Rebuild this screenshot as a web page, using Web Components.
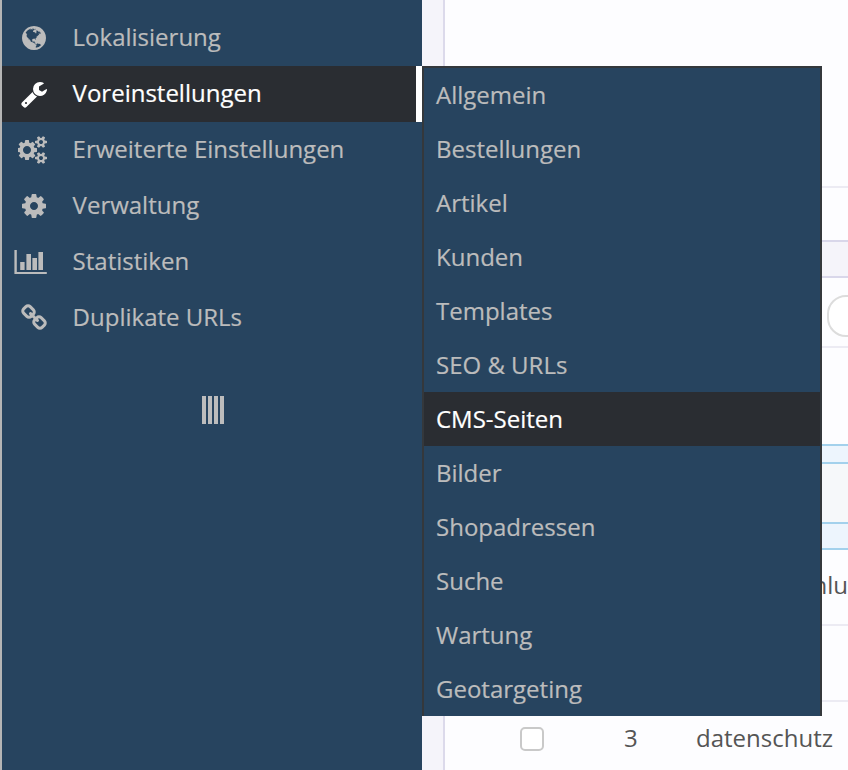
<!DOCTYPE html>
<html lang="de"><head><meta charset="utf-8"><title>Menü</title>
<style>
html,body{margin:0;padding:0;height:770px;overflow:hidden;background:#fdfdff;font-family:"Open Sans",sans-serif}
</style></head><body>
<admin-page>
  <side-bar slot="side">
    <nav-item icon="globe">Lokalisierung</nav-item>
    <nav-item icon="wrench" active>Voreinstellungen</nav-item>
    <nav-item icon="cogs">Erweiterte Einstellungen</nav-item>
    <nav-item icon="cog">Verwaltung</nav-item>
    <nav-item icon="chart">Statistiken</nav-item>
    <nav-item icon="link">Duplikate URLs</nav-item>
  </side-bar>
  <fly-menu slot="fly">
    <fly-item>Allgemein</fly-item><fly-item>Bestellungen</fly-item><fly-item>Artikel</fly-item><fly-item>Kunden</fly-item><fly-item>Templates</fly-item><fly-item>SEO &amp; URLs</fly-item><fly-item active>CMS-Seiten</fly-item><fly-item>Bilder</fly-item><fly-item>Shopadressen</fly-item><fly-item>Suche</fly-item><fly-item>Wartung</fly-item><fly-item>Geotargeting</fly-item>
  </fly-menu>
  <back-table slot="content"></back-table>
</admin-page>
<script>
const ICONS={
 wrench:['0 0 1792 1792',18,'M448 1472q0-26-19-45t-45-19-45 19-19 45 19 45 45 19 45-19 19-45zm644-420l-682 682q-37 37-90 37-52 0-91-37l-106-108q-38-36-38-90 0-53 38-91l681-681q39 98 114.5 173.5t173.5 114.5zm634-435q0 39-23 106-47 134-164.5 217.5t-258.5 83.5q-185 0-316.5-131.5t-131.5-316.5 131.5-316.5 316.5-131.5q58 0 121.5 16.5t107.5 46.5q16 11 16 28t-16 28l-293 169v224l193 107q5-3 79-48.5t135.5-81 70.5-35.5q15 0 23.5 10t8.5 25z'],
 cog:['0 0 1792 1792',18,'M1152 896q0-106-75-181t-181-75-181 75-75 181 75 181 181 75 181-75 75-181zm512-109v222q0 12-8 23t-20 13l-185 28q-19 54-39 91 35 50 107 138 10 12 10 25t-9 23q-27 37-99 108t-94 71q-12 0-26-9l-138-108q-44 23-91 38-16 136-29 186-7 28-36 28h-222q-14 0-24.5-8.5t-11.5-21.5l-28-184q-49-16-90-37l-141 107q-10 9-25 9-14 0-25-11-126-114-165-168-7-10-7-23 0-12 8-23 15-21 51-66.5t54-70.5q-27-50-41-99l-183-27q-13-2-21-12.5t-8-23.5v-222q0-12 8-23t19-13l186-28q14-46 39-92-40-57-107-138-10-12-10-24 0-10 9-23 26-36 98.5-107.5t94.5-71.5q13 0 26 10l138 107q44-23 91-38 16-136 29-186 7-28 36-28h222q14 0 24.5 8.5t11.5 21.5l28 184q49 16 90 37l142-107q9-9 24-9 13 0 25 10 129 119 165 170 7 8 7 22 0 12-8 23-15 21-51 66.5t-54 70.5q26 50 41 98l183 28q13 2 21 12.5t8 23.5z'],
 cogs:['0 0 1920 1792',15.5,'M832 896q0-106-75-181t-181-75-181 75-75 181 75 181 181 75 181-75 75-181zm768 512q0-52-38-90t-90-38-90 38-38 90q0 53 37.5 90.5t90.5 37.5 90.5-37.5 37.5-90.5zm0-1024q0-52-38-90t-90-38-90 38-38 90q0 53 37.5 90.5t90.5 37.5 90.5-37.5 37.5-90.5zm-384 421v185q0 10-7 19.5t-16 10.5l-155 24q-11 35-32 76 34 48 90 115 7 11 7 20 0 12-7 19-23 30-82.5 89.5t-78.5 59.5q-11 0-21-7l-115-90q-37 19-77 31-11 108-23 155-7 24-30 24h-186q-11 0-20-7.5t-10-17.5l-23-153q-34-10-75-31l-118 89q-7 7-20 7-11 0-21-8-144-133-144-160 0-9 7-19 10-14 41-53t47-61q-23-44-35-82l-152-24q-10-1-17-9.5t-7-19.5v-185q0-10 7-19.5t16-10.5l155-24q11-35 32-76-34-48-90-115-7-11-7-20 0-12 7-20 22-30 82-89t79-59q11 0 21 7l115 90q34-18 77-32 11-108 23-154 7-24 30-24h186q11 0 20 7.5t10 17.5l23 153q34 10 75 31l118-89q8-7 20-7 11 0 21 8 144 133 144 160 0 8-7 19-12 16-42 54t-45 60q23 48 34 82l152 23q10 2 17 10.5t7 19.5zm640 533v140q0 16-149 31-12 27-30 52 51 113 51 138 0 4-4 7-122 71-124 71-8 0-46-47t-52-68q-20 2-30 2t-30-2q-14 21-52 68t-46 47q-2 0-124-71-4-3-4-7 0-25 51-138-18-25-30-52-149-15-149-31v-140q0-16 149-31 13-29 30-52-51-113-51-138 0-4 4-7 4-2 35-20t59-34 30-16q8 0 46 46.5t52 67.5q20-2 30-2t30 2q51-71 92-112l6-2q4 0 124 70 4 3 4 7 0 25-51 138 17 23 30 52 149 15 149 31zm0-1024v140q0 16-149 31-12 27-30 52 51 113 51 138 0 4-4 7-122 71-124 71-8 0-46-47t-52-68q-20 2-30 2t-30-2q-14 21-52 68t-46 47q-2 0-124-71-4-3-4-7 0-25 51-138-18-25-30-52-149-15-149-31v-140q0-16 149-31 13-29 30-52-51-113-51-138 0-4 4-7 4-2 35-20t59-34 30-16q8 0 46 46.5t52 67.5q20-2 30-2t30 2q51-71 92-112l6-2q4 0 124 70 4 3 4 7 0 25-51 138 17 23 30 52 149 15 149 31z'],
 chart:['0 0 33 28',12,'M.4 2h2.4v22h30v2H.4zM6.2 14h4.4v8H6.2zM12.4 6h4.6v16h-4.6zM18.4 10H23v12h-4.6zM24.4 4H29v18h-4.6z'],
 link:['0 0 1792 1792',18,'M1520 1216q0-40-28-68l-208-208q-28-28-68-28-42 0-72 32 3 3 19 18.5t21.5 21.5 15 19 13 25.5 3.5 27.5q0 40-28 68t-68 28q-15 0-27.5-3.5t-25.5-13-19-15-21.5-21.5-18.5-19q-33 31-33 73 0 40 28 68l206 207q27 27 68 27 40 0 68-26l147-146q28-28 28-67zm-703-705q0-40-28-68l-206-207q-28-28-68-28-39 0-68 27l-147 146q-28 28-28 67 0 40 28 68l208 208q27 27 68 27 42 0 72-31-3-3-19-18.5t-21.5-21.5-15-19-13-25.5-3.5-27.5q0-40 28-68t68-28q15 0 27.5 3.5t25.5 13 19 15 21.5 21.5 18.5 19q33-31 33-73zm895 705q0 120-85 203l-147 146q-83 83-203 83-121 0-204-85l-206-207q-83-83-83-203 0-123 88-209l-88-88q-86 88-208 88-120 0-204-84l-208-208q-84-84-84-204t85-203l147-146q83-83 203-83 121 0 204 85l206 207q83 83 83 203 0 123-88 209l88 88q86-88 208-88 120 0 204 84l208 208q84 84 84 204z'],
 globe:['0 0 1792 1792',18,'M896 128q209 0 385.5 103t279.5 279.5 103 385.5-103 385.5-279.5 279.5-385.5 103-385.5-103-279.5-279.5-103-385.5 103-385.5 279.5-279.5 385.5-103zm274 521q-2 1-9.5 9.5t-13.5 9.5q2 0 4.5-5t5-11 3.5-7q6-7 22-15 14-6 52-12 34-8 51 11-2-2 9.5-13t14.5-12q3-2 15-4.5t15-7.5l2-22q-12 1-17.5-7t-6.5-21q0 2-6 8 0-7-4.5-8t-11.5 1-9 1q-10-3-15-7.5t-8-16.5-4-15q-2-5-9.5-11t-9.5-10q-1-2-2.5-5.5t-3-6.5-4-5.5-5.5-2.5-7 5-7.5 10-4.5 5q-3-2-6-1.5t-4.5 1-4.5 3-5 3.5q-3 2-8.5 3t-8.5 2q15-5-1-11-10-4-16-3 9-4 7.5-12t-8.5-14h5q-1-4-8.5-8.5t-17.5-8.5-13-6q-8-5-34-9.5t-33-.5q-5 6-4.5 10.5t4 14 3.5 12.5q1 6-5.5 13t-6.5 12q0 7 14 15.5t10 21.5q-3 8-16 16t-16 12q-5 8-1.5 18.5t10.5 16.5q2 2 1.5 4t-3.5 4.5-5.5 4-6.5 3.5l-3 2q-11 5-20.5-6t-13.5-26q-7-25-16-30-23-8-29 1-5-13-41-26-25-9-58-4 6-1 0-15-7-15-19-12 3-6 4-17.5t1-13.5q3-13 12-23 1-1 7-8.5t9.5-13.5.5-6q35 4 50-11 5-5 11.5-17t10.5-17q9-6 14-5.5t14.5 5.5 14.5 5q14 1 15.5-11t-7.5-20q12 1 3-17-4-7-8-9-12-4-27 5-8 4 2 8-1-1-9.5 10.5t-16.5 17.5-14-5q-1-1-5.5-13.5t-9.5-13.5q-8 0-16 15 3-8-11-15t-24-8q19-12-8-27-7-4-20.5-5t-19.5 4q-5 7-5.5 11.5t5 8 10.5 5.5 11.5 4 8.5 3q14 10 8 14-2 1-8.5 3.5t-11.5 4.5-6 4q-3 4 0 14t-2 14q-5-5-9-17.5t-7-16.5q7 9-25 6l-10-1q-4 0-16 2t-20.5 1-13.5-8q-4-8 0-20 1-4 4-2-4-3-11-9.5t-10-8.5q-46 15-94 41 6 1 12-1 5-2 13-6.5t10-5.5q34-14 42-7l5-5q14 16 20 25-7-4-30-1-20 6-22 12 7 12 5 18-4-3-11.5-10t-14.5-11-15-5q-16 0-22 1-146 80-235 222 7 7 12 8 4 1 5 9t2.5 11 11.5-3q9 8 3 19 1-1 44 27 19 17 21 21 3 11-10 18-1-2-9-9t-9-4q-3 5 .5 18.5t10.5 12.5q-7 0-9.5 16t-2.5 35.5-1 23.5l2 1q-3 12 5.5 34.5t21.5 19.5q-13 3 20 43 6 8 8 9 3 2 12 7.5t15 10 10 10.5q4 5 10 22.5t14 23.5q-2 6 9.5 20t10.5 23q-1 0-2.5 1t-2.5 1q3 7 15.5 14t15.5 13q1 3 2 10t3 11 8 2q2-20-24-62-15-25-17-29-3-5-5.5-15.5t-4.5-14.5q2 0 6 1.5t8.5 3.5 7.5 4 2 3q-3 7 2 17.5t12 18.5 17 19 12 13q6 6 14 19.5t0 13.5q9 0 20 10.5t17 19.5q5 8 8 26t5 24q2 7 8.5 13.5t12.5 9.5l16 8 13 7q5 2 18.5 10.5t21.5 11.5q10 4 16 4t14.5-2.5 13.5-3.5q15-2 29 15t21 21q36 19 55 11-2 1 .5 7.5t8 15.5 9 14.5 5.5 8.5q5 6 18 15t18 15q6-4 7-9-3 8 7 20t18 10q14-3 14-32-31 15-49-18 0-1-2.5-5.5t-4-8.5-2.5-8.5 0-7.5 5-3q9 0 10-3.5t-2-12.5-4-13q-1-8-11-20t-12-15q-5 9-16 8t-16-9q0 1-1.5 5.5t-1.5 6.5q-13 0-15-1 1-3 2.5-17.5t3.5-22.5q1-4 5.5-12t7.5-14.5 4-12.5-4.5-9.5-17.5-2.5q-19 1-26 20-1 3-3 10.5t-5 11.5-9 7q-7 3-24 2t-24-5q-13-8-22.5-29t-9.5-37q0-10 2.5-26.5t3-25-5.5-24.5q3-2 9-9.5t10-10.5q2-1 4.5-1.5t4.5 0 4-1.5 3-6q-1-1-4-3-3-3-4-3 7 3 28.5-1.5t27.5 1.5q15 11 22-2 0-1-2.5-9.5t-.5-13.5q5 27 29 9 3 3 15.5 5t17.5 5q3 2 7 5.5t5.5 4.5 5-.5 8.5-6.5q10 14 12 24 11 40 19 44 7 3 11 2t4.5-9.5 0-14-1.5-12.5l-1-8v-18l-1-8q-15-3-18.5-12t1.5-18.5 15-18.5q1-1 8-3.5t15.5-6.5 12.5-8q21-19 15-35 7 0 11-9-1 0-5-3t-7.5-5-4.5-2q9-5 2-16 5-3 7.5-11t7.5-10q9 12 21 2 8-8 1-16 5-7 20.5-10.5t18.5-9.5q7 2 8-2t1-12 3-12q4-5 15-9t13-5l17-11q3-4 0-4 18 2 31-11 10-11-6-20 3-6-3-9.5t-15-5.5q3-1 11.5-.5t10.5-1.5q15-10-7-16-17-5-43 12zm-163 877q206-36 351-189-3-3-12.5-4.5t-12.5-3.5q-18-7-24-8 1-7-2.5-13t-8-9-12.5-8-11-7q-2-2-7-6t-7-5.5-7.5-4.5-8.5-2-10 1l-3 1q-3 1-5.5 2.5t-5.5 3-4 3 0 2.5q-21-17-36-22-5-1-11-5.5t-10.5-7-10-1.5-11.5 7q-5 5-6 15t-2 13q-7-5 0-17.5t2-18.5q-3-6-10.5-4.5t-12 4.5-11.5 8.5-9 6.5-8.5 5.5-8.5 7.5q-3 4-6 12t-5 11q-2-4-11.5-6.5t-9.5-5.5q2 10 4 35t5 38q7 31-12 48-27 25-29 40-4 22 12 26 0 7-8 20.5t-7 21.5q0 6 2 16z']
};
function def(name,css,html,extra){
  customElements.define(name,class extends HTMLElement{
    constructor(){super();this.attachShadow({mode:'open'}).innerHTML='<style>'+css+'</style>'+html;}
    connectedCallback(){if(extra)extra(this);}
  });
}
def('admin-page',`:host{display:block;position:relative;width:848px;height:770px;overflow:hidden;background:#fdfdff}
.shell{display:grid;grid-template-columns:2px 420px 1fr;height:770px}
.edge{background:#b5b5b5}
.fly{position:absolute;left:422px;top:66px}`,
`<div class="shell"><div class="edge"></div><slot name="side"></slot><slot name="content"></slot></div><div class="fly"><slot name="fly"></slot></div>`);
def('side-bar',`:host{display:block;background:#27445f;padding-top:10px;box-sizing:border-box;height:770px}
.grip{display:flex;justify-content:center;gap:2px;margin-top:50px;padding-left:2px}
.grip i{display:block;width:4px;height:28px;background:#bdbdbd}`,
`<slot></slot><div class="grip"><i></i><i></i><i></i><i></i></div>`);
def('nav-item',`:host{display:flex;align-items:center;height:56px;font:24px/32px "Open Sans",sans-serif;color:#bcbcbc;box-sizing:border-box;-webkit-text-stroke:.2px currentColor}
:host([active]){background:#2a2d32;color:#fff;border-right:6px solid #fff}
.ic{width:70.6px;flex:none;color:inherit}
svg{display:block;fill:currentColor;height:28px}
.txt{white-space:nowrap;padding-bottom:2px}`,
`<div class="ic" id="s"></div><div class="txt"><slot></slot></div>`,
el=>{const n=el.getAttribute('icon'),[vb,ml,d]=ICONS[n];const[,,w,h]=vb.split(' ').map(Number);
 const ht=28;el.shadowRoot.getElementById('s').innerHTML=`<svg style="margin-left:${ml}px" viewBox="${vb}" width="${ht*w/h}" height="${ht}"><path d="${d}"/></svg>`;});
def('fly-menu',`:host{display:block;width:400px;box-sizing:border-box;background:#27445f;border:2px solid #34383c;border-width:2px 2px 0 2px}`,`<slot></slot>`);
def('fly-item',`:host{display:block;height:54px;padding-left:12px;font:24px/54px "Open Sans",sans-serif;color:#bcbcbc;white-space:nowrap;-webkit-text-stroke:.2px currentColor}
:host([active]){background:#2a2d32;color:#fff}`,`<slot></slot>`);
def('back-table',`:host{display:block;position:relative;height:770px;background:#f5f4fa;padding-left:21px;box-sizing:border-box;font:24px/32px "Open Sans",sans-serif;color:#555}
.main{height:100%;background:#fdfdff;border-left:2px solid #dcdaeb;position:relative;overflow:hidden}
.box{position:absolute;left:0;right:0;box-sizing:border-box}
.r1{top:186px;height:2px;background:#ecebf3}
.r2{top:240px;height:38px;background:#f5f4fa;border-top:2px solid #d9d7ea;border-bottom:2px solid #d9d7ea}
.rnd{position:absolute;left:382px;top:295px;width:60px;height:38px;border:2px solid #dcdcdc;border-radius:19px;background:#fff}
.r3{top:346px;height:2px;background:#ecebf3}
.r4{top:444px;height:20px;background:#edf5fd;border-top:2px solid #a3d1ec;border-bottom:2px solid #a3d1ec}
.r5{top:464px;height:58px;background:#f6f8fa}
.r6{top:522px;height:28px;background:#edf5fd;border-top:2px solid #a3d1ec;border-bottom:2px solid #a3d1ec}
.r7{top:624px;height:2px;background:#ecebf3}
.r8{top:700px;height:2px;background:#ecebf3}
.t{position:absolute;white-space:nowrap}
.hlu{left:272px;top:569px;width:131px;text-align:right;overflow:hidden;direction:rtl}
.cb{position:absolute;left:75px;top:727px;width:24px;height:24px;box-sizing:border-box;border:2px solid #c9c9c9;border-radius:5px;background:#fff}
.n{left:179px;top:722px}.d{left:251px;top:722px}`,
`<div class="main"><div class="box r1"></div><div class="box r2"></div><div class="rnd"></div><div class="box r3"></div><div class="box r4"></div><div class="box r5"></div><div class="box r6"></div><div class="t hlu">hlu</div><div class="box r7"></div><div class="box r8"></div><div class="cb"></div><div class="t n">3</div><div class="t d">datenschutz</div></div>`);
</script></body></html>
